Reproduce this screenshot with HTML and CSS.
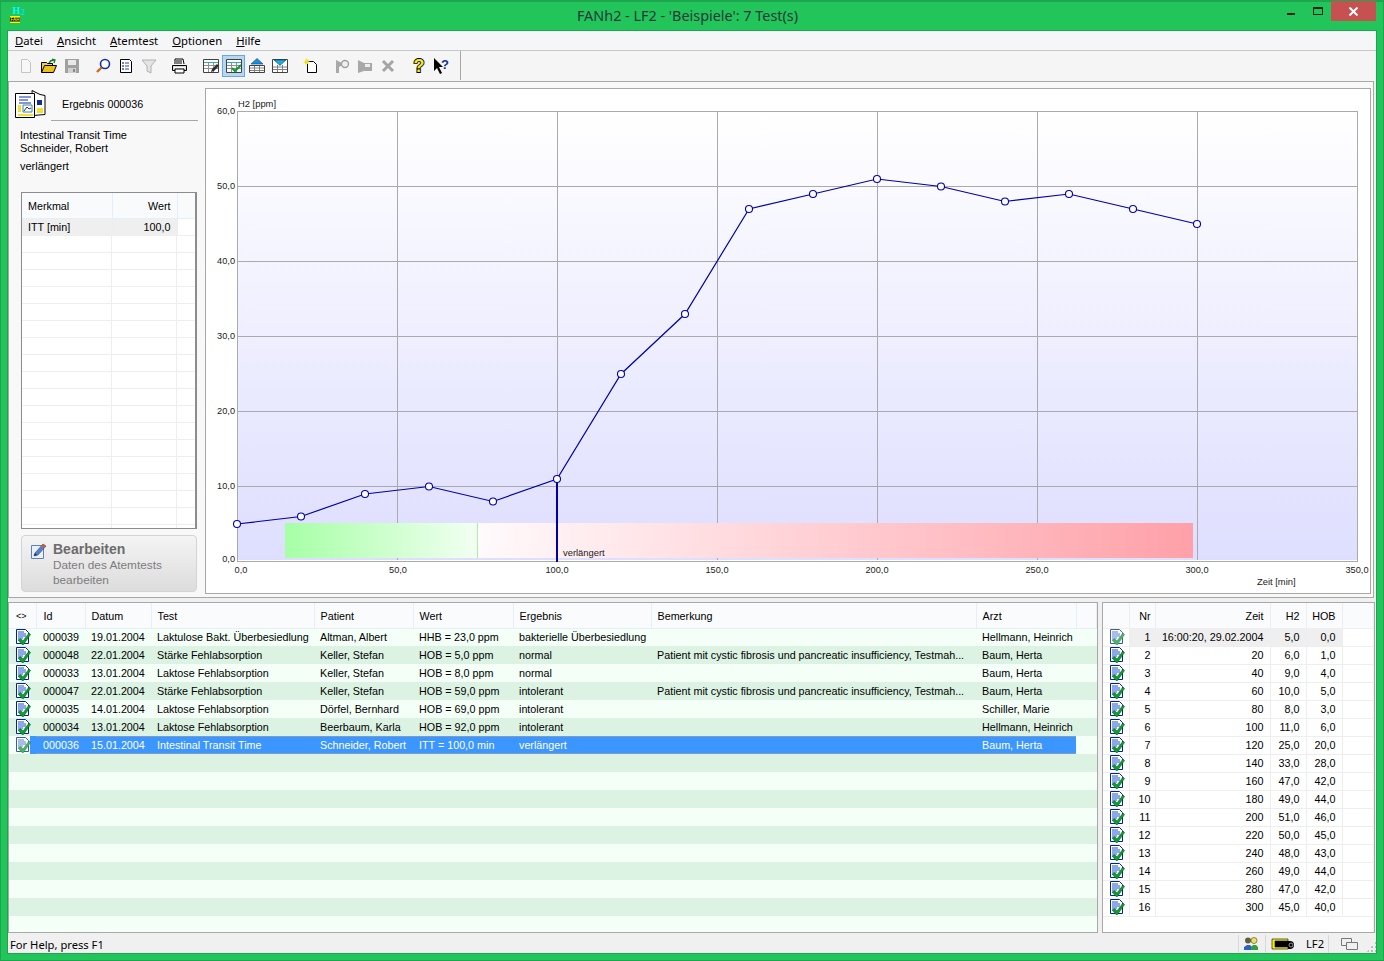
FILE: index.html
```html
<!DOCTYPE html>
<html lang="de">
<head>
    <meta charset="UTF-8">
    <title>FANh2 - LF2</title>
    <link rel="stylesheet" href="styles.css">
</head>
<body>
    <!-- shared row icon -->
    <svg class="defs" width="0" height="0">
        <symbol id="ok" viewBox="0 0 16 16">
            <path d="M1.5 .5h9l3 3v11h-12z" fill="#fff" stroke="#00209c"/>
            <path d="M3 3h6M3 5h8M3 7h8M3 9h5M3 11h4" stroke="#1a50d0" fill="none"/>
            <path d="M5 9.5l3 2.5 6-8 1.5 1.5-7 10h-1.5l-3.5-4z" fill="#0aa02a" stroke="#046018" stroke-width=".6"/>
        </symbol>
    </svg>

    <div class="titlebar">
        <svg class="app-icon" width="17" height="21" viewBox="0 -4 17 21">
            <text x="2.5" y="7" class="app-h">H</text>
            <text x="11" y="8" class="app-2">2</text>
            <rect x="0" y="9" width="10" height="7" fill="#ffff00"/>
            <rect x="0" y="10.5" width="10" height="4" fill="#000"/>
            <text x="0.5" y="14" class="app-fan">FAH</text>
        </svg>
        <div class="title">FANh2 - LF2 - 'Beispiele': 7 Test(s)</div>
        <div class="controls">
            <div class="ctl-min"></div>
            <div class="ctl-max"></div>
            <div class="ctl-close">
                <svg width="11" height="9" viewBox="0 0 11 9"><path d="M1.5 .5l8 8M9.5 .5l-8 8" stroke="#fff" stroke-width="2" fill="none"/></svg>
            </div>
        </div>
    </div>

    <div class="client">
        <div class="menu">
            <span class="menu-item"><u>D</u>atei</span>
            <span class="menu-item"><u>A</u>nsicht</span>
            <span class="menu-item"><u>A</u>temtest</span>
            <span class="menu-item"><u>O</u>ptionen</span>
            <span class="menu-item"><u>H</u>ilfe</span>
        </div>

        <div class="toolbar">
            <div class="tool-group">
                <div class="tool"><svg width="16" height="16" viewBox="0 0 16 16"><path d="M3.5 1.5h6l3 3v10h-9z" fill="#f8f8f8" stroke="#c4c4c4"/></svg></div>
                <div class="tool"><svg width="16" height="16" viewBox="0 0 16 16"><path d="M.5 14.5v-10h5l1 1h5v2" fill="#f0d040" stroke="#000"/><path d="M.5 14.5l3-7h12l-3 7z" fill="#e8c020" stroke="#000"/><path d="M8 5c1-2 3-3 5-3M11 1l3 1-1 3" stroke="#108020" fill="none" stroke-width="1.3"/></svg></div>
                <div class="tool"><svg width="16" height="16" viewBox="0 0 16 16"><path d="M1 1h14v14h-14z" fill="#a0a0a0"/><path d="M4 2h8v5h-8z" fill="#e8e8e8"/><path d="M4 10h8v5h-8z" fill="#d0d0d0"/><path d="M9 11h2v3h-2z" fill="#888"/></svg></div>
            </div>
            <div class="tool-group">
                <div class="tool"><svg width="16" height="16" viewBox="0 0 16 16"><circle cx="10" cy="6" r="4.5" fill="#fff" stroke="#1030b0" stroke-width="1.6"/><path d="M6.5 9.5l-4.5 4.5" stroke="#d06810" stroke-width="2.4"/></svg></div>
                <div class="tool"><svg width="16" height="16" viewBox="0 0 16 16"><path d="M2.5 1.5h9l2 2v11h-11z" fill="#fff" stroke="#000"/><path d="M4 5h2M4 8h2M4 11h2" stroke="#000" fill="none"/><path d="M7 5h4M7 8h4M7 11h4" stroke="#2040c0" fill="none"/></svg></div>
                <div class="tool"><svg width="16" height="16" viewBox="0 0 16 16"><path d="M1 2h14l-5 6v7l-4-2v-5z" fill="#e4e4e4" stroke="#b0b0b0"/></svg></div>
            </div>
            <div class="tool-group">
                <div class="tool"><svg width="17" height="16" viewBox="0 0 17 16"><path d="M4 6v-5h8l1 5" fill="#fff" stroke="#000"/><path d="M1.5 7.5h14v5h-14z" fill="#d8d8d8" stroke="#000"/><path d="M4 11h9v4h-9z" fill="#fff" stroke="#000"/><path d="M5 3h6M5 5h6" stroke="#000"/><path d="M2.5 9.5h12" stroke="#fff"/></svg></div>
            </div>
            <div class="tool-group">
                <div class="tool"><svg width="16" height="16" viewBox="0 0 16 16"><path d="M.5 1.5h15v13h-15z" fill="#fff" stroke="#404040"/><path d="M1 4.5h14" stroke="#30b0b0"/><path d="M1 7.5h14M1 10.5h14M5.5 5v9M10.5 5v9" stroke="#909090"/><path d="M8 14l1-3 5-5 2 2-5 5z" fill="#303030"/></svg></div>
                <div class="tool tool-on"><svg width="16" height="16" viewBox="0 0 16 16"><path d="M.5 1.5h15v13h-15z" fill="#fff" stroke="#404040"/><path d="M1 4.5h14" stroke="#30b0b0"/><path d="M1 7.5h14M1 10.5h14M5.5 5v9M10.5 5v9" stroke="#909090"/><path d="M6 10l3 3 6-6" stroke="#0a9a2a" stroke-width="2" fill="none"/></svg></div>
                <div class="tool"><svg width="16" height="16" viewBox="0 0 16 16"><path d="M.5 7.5h15v7h-15z" fill="#fff" stroke="#404040"/><path d="M1 10h14M1 12.5h14M5.5 8v6M10.5 8v6" stroke="#808080"/><path d="M2 6l6-5.5 6 5.5z" fill="#1890e0" stroke="#104080" stroke-width=".6"/></svg></div>
                <div class="tool"><svg width="16" height="16" viewBox="0 0 16 16"><path d="M.5 1.5h15v13h-15z" fill="#fff" stroke="#404040"/><path d="M1 9h14M1 11.5h14M5.5 7v7M10.5 7v7" stroke="#808080"/><path d="M2 2h12l-6 5.5z" fill="#18b0d8" stroke="#104080" stroke-width=".6"/></svg></div>
            </div>
            <div class="tool-group">
                <div class="tool"><svg width="16" height="16" viewBox="0 0 16 16"><path d="M4.5 3.5h6l3 3v8h-9z" fill="#fff" stroke="#000"/><path d="M3 0l1 2 2-1-1 2 2 1-2 .5 .5 2-2-1-1.5 1.5 0-2-2-.5 2-1z" fill="#f0e020"/></svg></div>
            </div>
            <div class="tool-group">
                <div class="tool"><svg width="16" height="16" viewBox="0 0 16 16"><path d="M2 2l8 4-5 3v6h-3z" fill="#a8a8a8"/><circle cx="11" cy="6" r="3.5" fill="#f0f0f0" stroke="#a0a0a0" stroke-width="1.4"/></svg></div>
                <div class="tool"><svg width="16" height="16" viewBox="0 0 16 16"><path d="M1 2l6 3h8v8h-8l-6 2z" fill="#a8a8a8"/><path d="M8 6h5v3h-5z" fill="#eee"/></svg></div>
                <div class="tool"><svg width="16" height="16" viewBox="0 0 16 16"><path d="M3 3l10 10M13 3l-10 10" stroke="#a4a4a4" stroke-width="3" fill="none"/></svg></div>
            </div>
            <div class="tool-group">
                <div class="tool"><svg width="16" height="20" viewBox="0 0 16 20"><text x="8" y="16" class="help-q">?</text></svg></div>
                <div class="tool"><svg width="20" height="20" viewBox="0 0 20 20"><path d="M2 2v13l3-3 3 6 2-1-3-6h4z" fill="#000"/><text x="9" y="13" class="help-arrow">?</text></svg></div>
            </div>
            <div class="tool-sep"></div>
        </div>

        <div class="main">
            <div class="side">
                <div class="side-head">
                    <svg width="31" height="29" viewBox="0 0 31 29">
                        <path d="M17 .5l8 4 5 1v19l-12 1z" fill="#fff" stroke="#000"/>
                        <path d="M.5 3.5h19v24h-19z" fill="#fff" stroke="#000"/>
                        <path d="M4 7h12M4 10h9M4 13h12" stroke="#0830b0" fill="none"/>
                        <path d="M8 15h9v7h-9z" fill="#fff" stroke="#4080a0"/>
                        <path d="M9 21l3-4 2 2 2-1" stroke="#0830b0" fill="none"/>
                        <path d="M3 24h15v2h-15z" fill="#f0e030"/>
                        <path d="M3 15h3v7h-3z" fill="#f0e030"/>
                        <path d="M22 10h5v5h-5z" fill="#1030a0"/>
                        <path d="M22 18h6v5h-6z" fill="#f0e030"/>
                    </svg>
                    <div class="side-title">Ergebnis 000036</div>
                </div>
                <div class="side-info">
                    <div>Intestinal Transit Time</div>
                    <div>Schneider, Robert</div>
                    <div class="side-result">verlängert</div>
                </div>
                <div class="prop-frame">
                    <table class="prop-table">
                        <tr class="prop-head"><th>Merkmal</th><th class="num">Wert</th><th></th></tr>
                        <tr class="prop-row"><td class="hit">ITT [min]</td><td class="num hit">100,0</td><td></td></tr>
                    </table>
                    <div class="prop-fill"></div>
                </div>
                <div class="edit-btn">
                    <svg width="18" height="18" viewBox="0 0 18 18">
                        <path d="M1.5 3.5h12v13h-12z" fill="#e8f0fc" stroke="#6080b0"/>
                        <path d="M4 14l1-3 8-9 3 2-8 9z" fill="#5a80c4" stroke="#2c4a88" stroke-width=".6"/>
                        <path d="M12 3l3 2" stroke="#e05828" stroke-width="2.4"/>
                        <path d="M4 14l1-3 2 2z" fill="#203060"/>
                    </svg>
                    <div class="edit-text">
                        <div class="edit-title">Bearbeiten</div>
                        <div>Daten des Atemtests bearbeiten</div>
                    </div>
                </div>
            </div>

            <div class="chart">
                <svg width="1164" height="504" viewBox="206 89 1164 504">
                    <defs>
                        <linearGradient id="plotbg" x1="0" y1="0" x2="0" y2="1">
                            <stop offset="0" stop-color="#ffffff"/>
                            <stop offset="1" stop-color="#dedeff"/>
                        </linearGradient>
                        <linearGradient id="goodband">
                            <stop offset="0" stop-color="#a6ffa6"/>
                            <stop offset="1" stop-color="#f2fff2"/>
                        </linearGradient>
                        <linearGradient id="badband">
                            <stop offset="0" stop-color="#fffafc"/>
                            <stop offset="1" stop-color="#ffa0a8"/>
                        </linearGradient>
                    </defs>
                    <rect x="237" y="111" width="1120" height="450" fill="url(#plotbg)"/>
                    <path class="gridline" d="M397.5 111v451M557.5 111v451M717.5 111v451M877.5 111v451M1037.5 111v451M1197.5 111v451M1357.5 111v451M237.5 111v451M237 111.5h1121M237 186.5h1121M237 261.5h1121M237 336.5h1121M237 411.5h1121M237 486.5h1121M237 561.5h1121"/>
                    <path d="M238 560.5h1119" stroke="#fff" fill="none"/>
                    <rect x="285" y="523" width="192" height="35" fill="url(#goodband)"/>
                    <rect x="477" y="523" width="1" height="35" fill="#a8f0a8"/>
                    <rect x="478" y="523" width="715" height="35" fill="url(#badband)"/>
                    <text x="563" y="556" class="axis">verlängert</text>
                    <path d="M557 479v83" stroke="#0000a8" stroke-width="2" fill="none"/>
                    <g transform="translate(0 .5)">
                        <polyline class="curve" points="237,523.5 301,516 365,493.5 429,486 493,501 557,478.5 621,373.5 685,313.5 749,208.5 813,193.5 877,178.5 941,186 1005,201 1069,193.5 1133,208.5 1197,223.5"/>
                        <g class="dots">
                            <circle cx="237" cy="523.5" r="3.5"/><circle cx="301" cy="516" r="3.5"/><circle cx="365" cy="493.5" r="3.5"/><circle cx="429" cy="486" r="3.5"/>
                            <circle cx="493" cy="501" r="3.5"/><circle cx="557" cy="478.5" r="3.5"/><circle cx="621" cy="373.5" r="3.5"/><circle cx="685" cy="313.5" r="3.5"/>
                            <circle cx="749" cy="208.5" r="3.5"/><circle cx="813" cy="193.5" r="3.5"/><circle cx="877" cy="178.5" r="3.5"/><circle cx="941" cy="186" r="3.5"/>
                            <circle cx="1005" cy="201" r="3.5"/><circle cx="1069" cy="193.5" r="3.5"/><circle cx="1133" cy="208.5" r="3.5"/><circle cx="1197" cy="223.5" r="3.5"/>
                        </g>
                    </g>
                    <text x="238" y="107" class="axis">H2 [ppm]</text>
                    <g class="axis-num y-labels">
                        <text x="235" y="114">60,0</text><text x="235" y="189">50,0</text><text x="235" y="264">40,0</text><text x="235" y="339">30,0</text><text x="235" y="414">20,0</text><text x="235" y="489">10,0</text><text x="235" y="562">0,0</text>
                    </g>
                    <g class="axis-num x-labels">
                        <text x="241" y="573">0,0</text><text x="398" y="573">50,0</text><text x="557" y="573">100,0</text><text x="717" y="573">150,0</text><text x="877" y="573">200,0</text><text x="1037" y="573">250,0</text><text x="1197" y="573">300,0</text><text x="1357" y="573">350,0</text>
                    </g>
                    <text x="1257" y="585" class="axis">Zeit [min]</text>
                </svg>
            </div>
        </div>

        <div class="bottom">
            <div class="grid grid-tests">
                <table>
                    <colgroup><col class="c-ic"><col class="c-id"><col class="c-dat"><col class="c-test"><col class="c-pat"><col class="c-wert"><col class="c-erg"><col class="c-bem"><col class="c-arzt"><col></colgroup>
                    <thead><tr><th class="arrows">&lt;&gt;</th><th>Id</th><th>Datum</th><th>Test</th><th>Patient</th><th>Wert</th><th>Ergebnis</th><th>Bemerkung</th><th>Arzt</th><th></th></tr></thead>
                    <tbody>
                        <tr><td class="ic"><svg><use href="#ok"/></svg></td><td>000039</td><td>19.01.2004</td><td>Laktulose Bakt. Überbesiedlung</td><td>Altman, Albert</td><td>HHB = 23,0 ppm</td><td>bakterielle Überbesiedlung</td><td></td><td>Hellmann, Heinrich</td><td></td></tr>
                        <tr><td class="ic"><svg><use href="#ok"/></svg></td><td>000048</td><td>22.01.2004</td><td>Stärke Fehlabsorption</td><td>Keller, Stefan</td><td>HOB = 5,0 ppm</td><td>normal</td><td>Patient mit cystic fibrosis und pancreatic insufficiency, Testmah...</td><td>Baum, Herta</td><td></td></tr>
                        <tr><td class="ic"><svg><use href="#ok"/></svg></td><td>000033</td><td>13.01.2004</td><td>Laktose Fehlabsorption</td><td>Keller, Stefan</td><td>HOB = 8,0 ppm</td><td>normal</td><td></td><td>Baum, Herta</td><td></td></tr>
                        <tr><td class="ic"><svg><use href="#ok"/></svg></td><td>000047</td><td>22.01.2004</td><td>Stärke Fehlabsorption</td><td>Keller, Stefan</td><td>HOB = 59,0 ppm</td><td>intolerant</td><td>Patient mit cystic fibrosis und pancreatic insufficiency, Testmah...</td><td>Baum, Herta</td><td></td></tr>
                        <tr><td class="ic"><svg><use href="#ok"/></svg></td><td>000035</td><td>14.01.2004</td><td>Laktose Fehlabsorption</td><td>Dörfel, Bernhard</td><td>HOB = 69,0 ppm</td><td>intolerant</td><td></td><td>Schiller, Marie</td><td></td></tr>
                        <tr><td class="ic"><svg><use href="#ok"/></svg></td><td>000034</td><td>13.01.2004</td><td>Laktose Fehlabsorption</td><td>Beerbaum, Karla</td><td>HOB = 92,0 ppm</td><td>intolerant</td><td></td><td>Hellmann, Heinrich</td><td></td></tr>
                        <tr class="selected"><td class="ic"><svg><use href="#ok"/></svg></td><td>000036</td><td>15.01.2004</td><td>Intestinal Transit Time</td><td>Schneider, Robert</td><td>ITT = 100,0 min</td><td>verlängert</td><td></td><td>Baum, Herta</td><td class="after"></td></tr>
                        <tr><td colspan="10"></td></tr>
                        <tr><td colspan="10"></td></tr>
                        <tr><td colspan="10"></td></tr>
                        <tr><td colspan="10"></td></tr>
                        <tr><td colspan="10"></td></tr>
                        <tr><td colspan="10"></td></tr>
                        <tr><td colspan="10"></td></tr>
                        <tr><td colspan="10"></td></tr>
                        <tr><td colspan="10"></td></tr>
                    </tbody>
                </table>
            </div>
            <div class="grid grid-points">
                <table>
                    <colgroup><col class="c-ic2"><col class="c-nr"><col class="c-zeit"><col class="c-val"><col class="c-val"><col></colgroup>
                    <thead><tr><th></th><th class="nr">Nr</th><th>Zeit</th><th>H2</th><th>HOB</th><th></th></tr></thead>
                    <tbody>
                        <tr class="current"><td class="ic"><svg><use href="#ok"/></svg></td><td class="nr">1</td><td>16:00:20, 29.02.2004</td><td>5,0</td><td>0,0</td><td></td></tr>
                        <tr><td class="ic"><svg><use href="#ok"/></svg></td><td class="nr">2</td><td>20</td><td>6,0</td><td>1,0</td><td></td></tr>
                        <tr><td class="ic"><svg><use href="#ok"/></svg></td><td class="nr">3</td><td>40</td><td>9,0</td><td>4,0</td><td></td></tr>
                        <tr><td class="ic"><svg><use href="#ok"/></svg></td><td class="nr">4</td><td>60</td><td>10,0</td><td>5,0</td><td></td></tr>
                        <tr><td class="ic"><svg><use href="#ok"/></svg></td><td class="nr">5</td><td>80</td><td>8,0</td><td>3,0</td><td></td></tr>
                        <tr><td class="ic"><svg><use href="#ok"/></svg></td><td class="nr">6</td><td>100</td><td>11,0</td><td>6,0</td><td></td></tr>
                        <tr><td class="ic"><svg><use href="#ok"/></svg></td><td class="nr">7</td><td>120</td><td>25,0</td><td>20,0</td><td></td></tr>
                        <tr><td class="ic"><svg><use href="#ok"/></svg></td><td class="nr">8</td><td>140</td><td>33,0</td><td>28,0</td><td></td></tr>
                        <tr><td class="ic"><svg><use href="#ok"/></svg></td><td class="nr">9</td><td>160</td><td>47,0</td><td>42,0</td><td></td></tr>
                        <tr><td class="ic"><svg><use href="#ok"/></svg></td><td class="nr">10</td><td>180</td><td>49,0</td><td>44,0</td><td></td></tr>
                        <tr><td class="ic"><svg><use href="#ok"/></svg></td><td class="nr">11</td><td>200</td><td>51,0</td><td>46,0</td><td></td></tr>
                        <tr><td class="ic"><svg><use href="#ok"/></svg></td><td class="nr">12</td><td>220</td><td>50,0</td><td>45,0</td><td></td></tr>
                        <tr><td class="ic"><svg><use href="#ok"/></svg></td><td class="nr">13</td><td>240</td><td>48,0</td><td>43,0</td><td></td></tr>
                        <tr><td class="ic"><svg><use href="#ok"/></svg></td><td class="nr">14</td><td>260</td><td>49,0</td><td>44,0</td><td></td></tr>
                        <tr><td class="ic"><svg><use href="#ok"/></svg></td><td class="nr">15</td><td>280</td><td>47,0</td><td>42,0</td><td></td></tr>
                        <tr><td class="ic"><svg><use href="#ok"/></svg></td><td class="nr">16</td><td>300</td><td>45,0</td><td>40,0</td><td></td></tr>
                        <tr><td colspan="6"></td></tr>
                    </tbody>
                </table>
            </div>
        </div>

        <div class="status">
            <div class="status-text">For Help, press F1</div>
            <div class="status-cell cell-users">
                <svg width="16" height="14" viewBox="0 0 16 14"><circle cx="5" cy="3.5" r="3" fill="#606040"/><circle cx="11" cy="3.5" r="3" fill="#f0e060" stroke="#404020" stroke-width=".6"/><path d="M1 13v-3l3-2h3l2 2v3z" fill="#3060c0"/><path d="M8 13v-3l2-2h3l2 2v3z" fill="#30a040"/></svg>
            </div>
            <div class="status-cell cell-key">
                <svg width="26" height="12" viewBox="0 0 26 12"><path d="M1 1h15v2h3a4 4 0 0 1 0 8h-18z" fill="#000"/><path d="M1 1h16v2h-13v6h13v2h-16z" fill="#f8f000" stroke="#000" stroke-width=".6"/><circle cx="20" cy="7" r="2" fill="none" stroke="#999"/></svg>
            </div>
            <div class="status-cell cell-lf">LF2</div>
            <div class="status-cell cell-win">
                <svg width="17" height="12" viewBox="0 0 17 12"><path d="M.5 .5h10v7h-10z" fill="none" stroke="#777"/><path d="M5.5 4.5h11v7h-11z" fill="#f0f0f0" stroke="#777"/></svg>
            </div>
            <div class="grip"></div>
        </div>
    </div>
</body>
</html>
```

FILE: styles.css
```css
* {
    box-sizing: border-box;
}

body {
    margin: 0;
    width: 1384px;
    height: 961px;
    overflow: hidden;
    background: #22c55a;
    color: #000;
    font-family: "Liberation Sans", Arial, sans-serif;
    font-size: 10.75px;
    display: flex;
    flex-direction: column;
    border-top: 1px solid #1ea550;
    box-shadow: inset 0 0 0 1px #1ea550;
}

.defs {
    position: absolute;
}

/* title bar */
.titlebar {
    height: 30px;
    display: flex;
    flex: none;
}

.app-icon {
    margin: 2px 0 0 10px;
}

.app-h {
    font: bold 10px "Liberation Serif", serif;
    fill: #00ffff;
}

.app-2 {
    font: bold 8px "Liberation Serif", serif;
    fill: #00e0ff;
}

.app-fan {
    font: bold 4.5px "Liberation Sans", sans-serif;
    fill: #ffff00;
}

.title {
    flex: 1;
    padding-left: 61px;
    text-align: center;
    font-family: "Noto Sans", sans-serif;
    font-size: 14.4px;
    line-height: 30px;
    color: #24383a;
}

.controls {
    width: 97px;
    display: flex;
    align-items: flex-start;
    flex: none;
}

.ctl-min {
    width: 8px;
    height: 2px;
    margin: 12px 18px 0 0;
    background: #222;
}

.ctl-max {
    width: 10px;
    height: 8px;
    margin: 6px 8px 0 0;
    border: 1px solid #222;
    border-top-width: 2px;
}

.ctl-close {
    width: 45px;
    height: 20px;
    background: #c75050;
    display: flex;
    align-items: center;
    justify-content: center;
}

.client {
    flex: 1;
    margin: 0 8px 8px;
    background: #f0f0f0;
    display: flex;
    flex-direction: column;
    box-shadow: 0 0 0 1px #1ea550;
}

/* menu and toolbar */
.menu {
    height: 20px;
    flex: none;
    background: #f5f6f7;
    border-bottom: 1px solid #c8c8c8;
    display: flex;
    padding-left: 7px;
    gap: 14px;
    font-family: "Noto Sans", sans-serif;
    font-size: 11.3px;
    line-height: 19px;
}

.toolbar {
    height: 30px;
    flex: none;
    background: #f5f5f5;
    display: flex;
    align-items: center;
    padding: 0 0 1px 6px;
    gap: 8px;
}

.tool-group {
    display: flex;
}

.tool {
    width: 23px;
    height: 22px;
    display: flex;
    align-items: center;
    justify-content: center;
}

.tool-on {
    background: #b8d6f2;
    border: 1px solid #66a7e8;
}

.help-q {
    font: bold 18px "Liberation Sans", sans-serif;
    fill: #f8e820;
    stroke: #000;
    stroke-width: 1.8px;
    paint-order: stroke;
    text-anchor: middle;
}

.help-arrow {
    font: bold 13px "Liberation Sans", sans-serif;
    fill: #1030a0;
}

.tool-sep {
    width: 1px;
    height: 29px;
    margin-left: -1px;
    background: #a8a8a8;
}

/* main area */
.main {
    height: 517px;
    flex: none;
    margin-right: 2px;
    border: 1px solid #a8a8a8;
    background: #f8f8f8;
    display: flex;
}

.side {
    width: 196px;
    flex: none;
    padding: 8px 0 0 12px;
}

.side-head {
    display: flex;
    margin-left: -6px;
    height: 31px;
}

.side-title {
    width: 147px;
    height: 31px;
    margin-left: 5px;
    padding-left: 11px;
    line-height: 28px;
    border-bottom: 1px solid #a8a8a8;
}

.side-info {
    margin: 8px 0 0 -1px;
    line-height: 13px;
    font-size: 11px;
}

.side-result {
    margin-top: 5px;
}

.prop-frame {
    width: 176px;
    height: 337px;
    margin-top: 19px;
    border: 1px solid #8c8c8c;
    border-right-width: 2px;
    background: #fff;
}

.prop-table {
    width: 100%;
    border-collapse: collapse;
    table-layout: fixed;
}

.prop-table th {
    height: 25px;
    font-weight: normal;
    text-align: left;
    padding: 2px 0 0 6px;
    background: #f9fafc;
    border-right: 1px solid #e6eefa;
    border-bottom: 1px solid #e6eefa;
}

.prop-table th:first-child {
    width: 90px;
}

.prop-table th:nth-child(2) {
    width: 65px;
}

.prop-table td {
    height: 17px;
    padding: 0 0 0 6px;
    border-right: 1px solid #eee;
    border-bottom: 1px solid #eee;
}

.prop-table th:last-child,
.prop-table td:last-child {
    border-right: none;
}

.prop-table th.num,
.prop-table td.num {
    text-align: right;
    padding-right: 6px;
}

.prop-table td.hit {
    background: #efefef;
}

.prop-fill {
    height: 292px;
    background-image:
        linear-gradient(#eee, #eee),
        linear-gradient(#eee, #eee),
        repeating-linear-gradient(to bottom, transparent 0, transparent 16px, #eee 16px, #eee 17px);
    background-size: 1px 100%, 1px 100%, 100% 100%;
    background-position: 89px 0, 154px 0, 0 0;
    background-repeat: no-repeat;
}

.edit-btn {
    width: 176px;
    height: 57px;
    margin-top: 6px;
    border: 1px solid #d4d4d4;
    border-radius: 4px;
    background: linear-gradient(#f4f4f4, #dcdcdc);
    display: flex;
    padding: 6px 6px 0 8px;
    gap: 5px;
    font-size: 11.8px;
    line-height: 15px;
    color: #7c7c7c;
}

.edit-btn svg {
    flex: none;
}

.edit-title {
    font-size: 14px;
    font-weight: bold;
    color: #6c6c6c;
    line-height: 14px;
    margin-bottom: 2px;
}

.chart {
    width: 1166px;
    height: 506px;
    margin: 6px 0 0 0;
    border: 1px solid #a8a8a8;
    background: #fff;
    flex: none;
}

.chart svg {
    display: block;
}

.gridline {
    stroke: #aaa;
    fill: none;
}

.curve {
    fill: none;
    stroke: #0000a8;
    stroke-width: 1.2;
}

.dots circle {
    fill: #fff;
    stroke: #0000b4;
    stroke-width: 1.1;
}

.axis {
    font: 9.4px "Liberation Sans", sans-serif;
    fill: #1a1a1a;
}

.axis-num {
    font: 9.2px "Liberation Sans", sans-serif;
    fill: #1a1a1a;
}

.y-labels {
    text-anchor: end;
}

.x-labels {
    text-anchor: middle;
}

/* data grids */
.bottom {
    height: 331px;
    flex: none;
    margin-top: 4px;
    display: flex;
    gap: 4px;
}

.grid {
    border: 1px solid #a8a8a8;
    background: #fff;
    overflow: hidden;
}

.grid table {
    border-collapse: collapse;
    table-layout: fixed;
    width: 100%;
}

.grid th {
    height: 25px;
    padding: 2px 0 0 6px;
    font-weight: normal;
    text-align: left;
    background: #fafbfd;
    border-right: 1px solid #e6eefa;
    border-bottom: 1px solid #e6eefa;
}

.grid td {
    height: 18px;
    padding: 0 0 0 6px;
    white-space: nowrap;
    overflow: hidden;
}

.grid td.ic {
    padding: 0 0 0 6px;
    line-height: 0;
}

.ic svg {
    width: 16px;
    height: 16px;
    vertical-align: middle;
}

.grid-tests {
    width: 1090px;
    background: #f3fff7;
}

.c-ic { width: 27px; }
.c-id { width: 49px; }
.c-dat { width: 66px; }
.c-test { width: 163px; }
.c-pat { width: 99px; }
.c-wert { width: 100px; }
.c-erg { width: 138px; }
.c-bem { width: 325px; }
.c-arzt { width: 100px; }

.grid-tests th:nth-child(2),
.grid-tests td:nth-child(2) {
    padding-left: 7px;
}

.grid th.arrows {
    font-size: 9px;
    padding-left: 7px;
}

.grid-tests tbody tr {
    background: #f3fff7;
}

.grid-tests tbody tr:nth-child(even) {
    background: #dcf3e4;
}

.grid-tests tbody tr.selected {
    background: #3c96ff;
    color: #fff;
}

.selected td.ic {
    background: linear-gradient(to right, #f3fff7 21px, #3c96ff 21px);
}

.selected td.ic svg,
.current td.ic svg {
    opacity: .75;
}

.selected td.after {
    background: #f3fff7;
}

/* focus line along the selected row */
.selected td:not(.ic):not(.after) {
    box-shadow: inset 0 1px 0 #7f9cc4, inset 0 -1px 0 #7f9cc4;
}

.grid-points {
    width: 273px;
}

.c-ic2 { width: 26px; }
.c-nr { width: 26px; }
.c-zeit { width: 115px; }
.c-val { width: 36px; }

.grid-points th,
.grid-points td {
    text-align: right;
    padding: 0 6px 0 0;
    border-right: 1px solid #eee;
    border-bottom: 1px solid #eee;
}

.grid-points th {
    padding-top: 2px;
}

.grid-points .nr {
    padding-right: 4px;
}

.grid-points td.ic {
    text-align: left;
    padding-left: 6px;
}

.grid-points .current td:nth-child(n+2):nth-child(-n+5) {
    background: #efefef;
}

/* status bar */
.status {
    height: 18px;
    flex: none;
    margin-top: 2px;
    display: flex;
    font-family: "Noto Sans", sans-serif;
    font-size: 11.2px;
    line-height: 20px;
}

.status-text {
    flex: 1;
    padding-left: 2px;
}

.status-cell {
    display: flex;
    align-items: center;
    border-left: 1px solid #d8d8d8;
    flex: none;
}

.cell-users { width: 27px; padding-left: 4px; }
.cell-key { width: 41px; padding-left: 5px; }
.cell-lf { width: 22px; border-left: none; }
.cell-win { width: 48px; padding-left: 12px; }

.grip {
    width: 10px;
    margin-left: -10px;
    background-image: radial-gradient(#b8b8b8 1px, transparent 1.2px);
    background-size: 4px 4px;
    height: 12px;
    align-self: flex-end;
    clip-path: polygon(100% 0, 100% 100%, 0 100%);
}
```
